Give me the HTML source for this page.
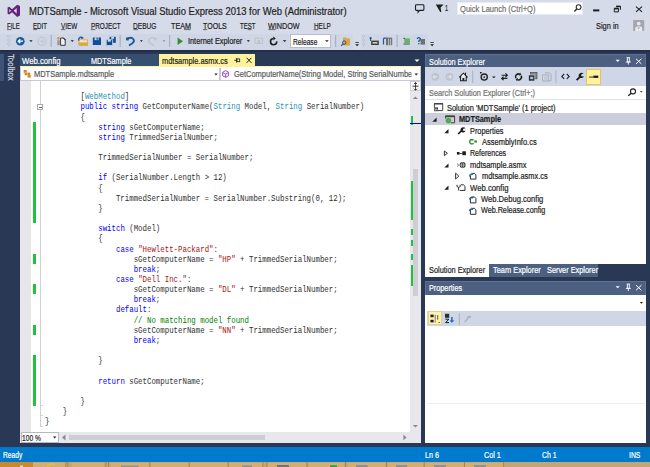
<!DOCTYPE html>
<html><head><meta charset="utf-8">
<style>
*{margin:0;padding:0;box-sizing:border-box}
html,body{width:650px;height:467px;overflow:hidden}
body{position:relative;background:#293955;font-family:"Liberation Sans",sans-serif;color:#1e1e1e}
.a{position:absolute}
.t{position:absolute;white-space:pre;line-height:1;transform-origin:0 0;-webkit-text-stroke:0.2px currentColor}
#code{left:44.5px;top:92.2px;font-family:"Liberation Mono",monospace;font-size:8.2px;line-height:10.15px;color:#303030;white-space:pre;transform:scaleX(0.9024);transform-origin:0 0}
.k{color:#0000ff}.ty{color:#2b91af}.s{color:#a31515}.c{color:#008000}
.grn{position:absolute;background:#1fc23d}
svg{position:absolute;left:0;top:0}
</style></head><body>
<!-- ============ top chrome ============ -->
<div class="a" style="left:0;top:0;width:650px;height:50px;background:#d6dbe9"></div>
<div class="a" style="left:0;top:34px;width:437px;height:16px;background:#cfd6e5"></div>
<div class="a" style="left:0;top:50px;width:650px;height:1.5px;background:#232f48"></div>
<!-- quick launch box -->
<div class="a" style="left:457px;top:1.5px;width:126px;height:13.2px;background:#fff;border:1px solid #e8ebf2"></div>
<!-- release combobox -->
<div class="a" style="left:290px;top:34.3px;width:41.2px;height:14px;background:#fff;border:1px solid #b8bccb"></div>
<!-- overflow regions of toolbars (lighter) -->
<div class="a" style="left:353px;top:34px;width:8px;height:16px;background:#d6dbe9"></div>
<div class="a" style="left:428px;top:34px;width:9px;height:16px;background:#d6dbe9"></div>

<!-- ============ document well ============ -->
<div class="a" style="left:0;top:53.7px;width:3.9px;height:27.3px;background:#3e5378"></div>
<div class="a" style="left:20px;top:54px;width:139px;height:12px;background:#364e6f"></div>
<div class="a" style="left:159px;top:54px;width:96px;height:12px;background:#fff29d"></div>
<div class="a" style="left:20px;top:66px;width:401px;height:1.2px;background:#fff29d"></div>
<!-- nav bar -->
<div class="a" style="left:20px;top:67.2px;width:401px;height:13.8px;background:#fff;border:1px solid #c6c9d6;border-top:none"></div>
<div class="a" style="left:219.2px;top:67.5px;width:1.8px;height:13px;background:#c6c9d6"></div>
<!-- editor -->
<div class="a" style="left:20px;top:81px;width:390px;height:351px;background:#fff"></div>
<div class="a" style="left:20px;top:81px;width:11px;height:351px;background:#e6e7e8"></div>
<div class="a" style="left:40px;top:81px;width:1.2px;height:345px;background:#d0d0d0"></div>
<div class="a" style="left:37px;top:104px;width:6.2px;height:6px;background:#fff;border:1px solid #a8a8a8"></div>
<div class="a" style="left:38.6px;top:106.6px;width:3px;height:0.9px;background:#666"></div>
<div class="a" style="left:40px;top:405px;width:3px;height:1px;background:#d0d0d0"></div>
<div class="a" style="left:40px;top:415px;width:3px;height:1px;background:#d0d0d0"></div>
<div class="a" style="left:40px;top:425.5px;width:3px;height:1px;background:#d0d0d0"></div>
<!-- green change bars -->
<div class="grn" style="left:33px;top:121.8px;width:3px;height:101.5px"></div>
<div class="grn" style="left:33px;top:253.8px;width:3px;height:10.15px"></div>
<div class="grn" style="left:33px;top:284.2px;width:3px;height:10.15px"></div>
<div class="grn" style="left:33px;top:324.9px;width:3px;height:10.15px"></div>
<div class="grn" style="left:33px;top:355.3px;width:3px;height:50.75px"></div>
<div id="code" class="a">        [<span class="ty">WebMethod</span>]
        <span class="k">public</span> <span class="k">string</span> GetComputerName(<span class="ty">String</span> Model, <span class="ty">String</span> SerialNumber)
        {
            <span class="k">string</span> sGetComputerName;
            <span class="k">string</span> TrimmedSerialNumber;

            TrimmedSerialNumber = SerialNumber;

            <span class="k">if</span> (SerialNumber.Length &gt; 12)
            {
                TrimmedSerialNumber = SerialNumber.Substring(0, 12);
            }

            <span class="k">switch</span> (Model)
            {
                <span class="k">case</span> <span class="s">"Hewlett-Packard"</span>:
                    sGetComputerName = <span class="s">"HP"</span> + TrimmedSerialNumber;
                    <span class="k">break</span>;
                <span class="k">case</span> <span class="s">"Dell Inc."</span>:
                    sGetComputerName = <span class="s">"DL"</span> + TrimmedSerialNumber;
                    <span class="k">break</span>;
                <span class="k">default</span>:
                    <span class="c">// No matching model found</span>
                    sGetComputerName = <span class="s">"NN"</span> + TrimmedSerialNumber;
                    <span class="k">break</span>;

            }

            <span class="k">return</span> sGetComputerName;

        }
    }
}</div>
<!-- vertical scrollbar -->
<div class="a" style="left:410px;top:81px;width:11px;height:362px;background:#e8e8ec"></div>
<div class="a" style="left:410px;top:81px;width:10.6px;height:10.4px;background:#f5f5f7;border:1px solid #cccedb"></div>
<div class="a" style="left:412.8px;top:168.6px;width:5.3px;height:127.1px;background:#cdced4"></div>
<div class="grn" style="left:410.5px;top:116px;width:2.5px;height:9.2px"></div>
<div class="a" style="left:410px;top:122.5px;width:11px;height:1.2px;background:#0000ff"></div>
<div class="grn" style="left:410.5px;top:181px;width:2.5px;height:39.4px"></div>
<div class="grn" style="left:410.5px;top:229px;width:2.5px;height:5.6px"></div>
<div class="grn" style="left:410.5px;top:240px;width:2.5px;height:6px"></div>
<div class="grn" style="left:410.5px;top:254.2px;width:2.5px;height:6.3px"></div>
<div class="grn" style="left:410.5px;top:265.2px;width:2.5px;height:20.8px"></div>
<!-- bottom bar -->
<div class="a" style="left:20px;top:432px;width:390px;height:11px;background:#e8e8ec"></div>
<div class="a" style="left:20.5px;top:432px;width:38px;height:11px;background:#fff;border:1px solid #b4b8c8"></div>
<div class="a" style="left:69px;top:434.6px;width:196px;height:5.6px;background:#cdced4"></div>

<!-- ============ solution explorer ============ -->
<div class="a" style="left:425px;top:54px;width:221px;height:13px;background:#4d6082;border:1px solid #5f7292;border-bottom:none"></div>
<div class="a" style="left:425px;top:67px;width:221px;height:19px;background:#cfd6e5"></div>
<div class="a" style="left:586.2px;top:69px;width:14.7px;height:15.5px;background:#fff29d;border:1px solid #e5c365"></div>
<div class="a" style="left:425px;top:86px;width:221px;height:178px;background:#fff"></div>
<div class="a" style="left:425px;top:99px;width:221px;height:1px;background:#dfe3ea"></div>
<div class="a" style="left:425px;top:113px;width:221px;height:11.5px;background:#cccedb"></div>
<!-- tabs -->
<div class="a" style="left:425px;top:264px;width:63.6px;height:13px;background:#fff"></div>
<div class="a" style="left:489px;top:264px;width:109px;height:13px;background:#4d6082"></div>

<!-- ============ properties ============ -->
<div class="a" style="left:425px;top:281px;width:221px;height:14px;background:#4d6082;border:1px solid #5f7292;border-bottom:none"></div>
<div class="a" style="left:425px;top:295px;width:221px;height:148px;background:#fff"></div>
<div class="a" style="left:427px;top:311px;width:219px;height:15px;background:#cfd6e5"></div>
<div class="a" style="left:427.7px;top:311.3px;width:14.8px;height:14px;background:#fff3b4;border:1px solid #e9cf7e"></div>
<div class="a" style="left:427px;top:403px;width:218px;height:1px;background:#efeff2"></div>

<!-- ============ status bar & taskbar ============ -->
<div class="a" style="left:0;top:446.8px;width:650px;height:15.2px;background:#007acc"></div>
<div class="a" style="left:0;top:462px;width:650px;height:5px;background:#c4a676"></div>
<div class="a" style="left:0;top:462px;width:32.5px;height:5px;background:#c98a2e"></div>

<svg width="650" height="467" viewBox="0 0 650 467">
<!-- VS logo -->
<path fill="#68217a" fill-rule="evenodd" d="M17.2,4.7 L20,6 L20,15.6 L17.2,16.9 L12.1,12.3 L9.2,14.6 L7.6,13.8 L7.6,7.5 L9.2,6.8 L12.1,9.3 Z M16.7,8.1 L13.6,10.8 L16.7,13.5 Z M9.3,9.0 L9.3,12.6 L11.1,10.8 Z"/>
<!-- feedback bubble -->
<path d="M416.4,4.8 H423 Q423.9,4.8 423.9,5.7 V9.5 Q423.9,10.4 423,10.4 H419.6 L418,12.2 L418,10.4 H416.4 Q415.5,10.4 415.5,9.5 V5.7 Q415.5,4.8 416.4,4.8 Z" fill="none" stroke="#1e1e1e" stroke-width="1.1"/>
<!-- notification flag -->
<path d="M435.8,4.4 L443.6,4.4 L440.6,7.6 L441.3,11.9 L440.2,12 Z" fill="#1e1e1e"/>
<!-- quick launch magnifier -->
<circle cx="578.6" cy="7.1" r="2.4" fill="none" stroke="#2d2d30" stroke-width="1.1"/>
<path d="M577,8.8 L574.3,11.5" stroke="#2d2d30" stroke-width="1.4"/>
<!-- window buttons -->
<rect x="593.1" y="9.4" width="6.2" height="2" fill="#1e1e1e"/>
<path d="M616,6.3 H620.4 V9.9 M614.3,8.4 H618.4 V11.9 H614.3 Z" fill="none" stroke="#1e1e1e" stroke-width="1"/>
<path d="M614.3,8.6 H618.4" stroke="#1e1e1e" stroke-width="1.6"/>
<path d="M616,6.5 H620.4" stroke="#1e1e1e" stroke-width="1.4"/>
<path d="M636,6.6 L642,11.8 M642,6.6 L636,11.8" stroke="#1e1e1e" stroke-width="1.1"/>
<!-- avatar -->
<rect x="633.2" y="20" width="11" height="11" fill="#a3a6ae"/>
<circle cx="638.7" cy="23.6" r="1.9" fill="#e6e8ee"/>
<path d="M635.2,31 V28.5 Q635.2,26.2 638.7,26.2 Q642.2,26.2 642.2,28.5 V31 Z" fill="#e6e8ee"/>
<path d="M637.6,27.2 L638.7,29.6 L639.8,27.2 Z" fill="#a3a6ae"/>

<g fill="#1e1e1e" opacity="0.75"><rect x="7.1" y="29.3" width="4.2" height="0.8"/><rect x="33.2" y="29.3" width="4.1" height="0.8"/><rect x="60.9" y="29.3" width="4.5" height="0.8"/><rect x="90.9" y="29.3" width="4.3" height="0.8"/><rect x="133.4" y="29.3" width="4.6" height="0.8"/><rect x="184.2" y="29.3" width="6.4" height="0.8"/><rect x="202.9" y="29.3" width="4.3" height="0.8"/><rect x="247.6" y="29.3" width="4.0" height="0.8"/><rect x="268.3" y="29.3" width="7.3" height="0.8"/><rect x="313.7" y="29.3" width="4.5" height="0.8"/></g>
<!-- ===== toolbar ===== -->
<!-- grip -->
<g fill="#a8afc0">
<rect x="7.3" y="35.5" width="1" height="1"/><rect x="9.5" y="35.5" width="1" height="1"/>
<rect x="8.4" y="37.5" width="1" height="1"/>
<rect x="7.3" y="39.5" width="1" height="1"/><rect x="9.5" y="39.5" width="1" height="1"/>
<rect x="8.4" y="41.5" width="1" height="1"/>
<rect x="7.3" y="43.5" width="1" height="1"/><rect x="9.5" y="43.5" width="1" height="1"/>
<rect x="8.4" y="45.5" width="1" height="1"/>
<rect x="362.2" y="35.5" width="1" height="1"/><rect x="364.2" y="35.5" width="1" height="1"/>
<rect x="363.2" y="37.5" width="1" height="1"/>
<rect x="362.2" y="39.5" width="1" height="1"/><rect x="364.2" y="39.5" width="1" height="1"/>
<rect x="363.2" y="41.5" width="1" height="1"/>
<rect x="362.2" y="43.5" width="1" height="1"/><rect x="364.2" y="43.5" width="1" height="1"/>
<rect x="363.2" y="45.5" width="1" height="1"/>
</g>
<!-- back -->
<circle cx="20.3" cy="41.2" r="4.3" fill="#1b5a9e"/>
<path d="M23,41.2 H18.4 M20.3,39.1 L18.2,41.2 L20.3,43.3" stroke="#fff" stroke-width="1.3" fill="none"/>
<path d="M29.4,40.3 H32.6 L31,42 Z" fill="#1e1e1e"/>
<!-- forward (disabled) -->
<circle cx="41.9" cy="41.2" r="4" fill="none" stroke="#c4c7cf" stroke-width="1.3"/>
<path d="M39.8,41.2 H43.8 M42,39.4 L43.8,41.2 L42,43" stroke="#c4c7cf" stroke-width="1.1" fill="none"/>
<!-- separators -->
<g fill="#a9b0c0">
<rect x="50.6" y="35" width="1.2" height="12"/>
<rect x="119.6" y="35" width="1.2" height="12"/>
<rect x="169" y="35" width="1.2" height="12"/>
<rect x="335" y="35" width="1.2" height="12"/>
<rect x="396.5" y="35" width="1.2" height="12"/>
</g>
<!-- new project -->
<rect x="57.2" y="37" width="2.3" height="2.6" fill="#d49b42"/>
<rect x="57.2" y="40.2" width="2.6" height="5" fill="#9a9a9a"/>
<path d="M60.6,38 H63.4 L65.2,39.8 V45.3 H60.6 Z" fill="#f4f4f4" stroke="#3a3a3a" stroke-width="1"/>
<path d="M63.2,37.8 L65.6,40.2" stroke="#3a3a3a" stroke-width="1.2"/>
<path d="M70.6,40.3 H73.9 L72.25,42 Z" fill="#1e1e1e"/>
<!-- open folder -->
<path d="M79,39 H82.2 L83,39.8 H87.6 V45.4 H79 Z" fill="#f3e3b8" stroke="#dca646" stroke-width="0.8"/>
<path d="M78.8,42.4 H87.8 V45.6 H78.8 Z" fill="#dca646"/>
<path d="M79.2,40.6 A2,2 0 0 1 82.4,38" stroke="#1b5a9e" stroke-width="1.3" fill="none"/>
<path d="M81.6,36.4 L83.8,38 L81.4,39.4 Z" fill="#1b5a9e"/>
<!-- save -->
<path d="M92.8,37.5 H101 V45 H92.8 Z" fill="#0e4f98"/>
<rect x="94.6" y="37.5" width="4" height="2.6" fill="#cfd6e5"/>
<rect x="96.5" y="37.9" width="1.3" height="1.8" fill="#0e4f98"/>
<rect x="94.3" y="42" width="5" height="3" fill="#0e4f98"/>
<!-- save all -->
<path d="M109.6,36.8 H115.8 V42.8 H109.6 Z" fill="#0e4f98"/>
<rect x="111.2" y="36.8" width="2.8" height="2" fill="#cfd6e5"/>
<path d="M106.2,39.6 H112.6 V45.5 H106.2 Z" fill="#0e4f98" stroke="#cfd6e5" stroke-width="0.8"/>
<rect x="107.8" y="39.7" width="3" height="2" fill="#cfd6e5"/>
<!-- undo -->
<path d="M127.6,38.6 Q131.6,36.6 133.6,39.4 Q134.8,41.4 132,43.6 L129,45.6" stroke="#1b5a9e" stroke-width="1.8" fill="none"/>
<rect x="126" y="37.5" width="2.8" height="2.9" fill="#1b5a9e"/>
<path d="M140,40.3 H142.8 L141.4,42 Z" fill="#1e1e1e"/>
<!-- redo disabled -->
<path d="M155.2,38.6 Q151.2,36.6 149.2,39.4 Q148,41.4 150.8,43.6 L153.8,45.6" stroke="#c2c5cd" stroke-width="1.6" fill="none"/>
<rect x="154" y="37.5" width="2.6" height="2.8" fill="#c2c5cd"/>
<path d="M162.7,40.3 H165.4 L164,42 Z" fill="#8a8e99"/>
<!-- play -->
<path d="M177.6,37.5 L183,41.2 L177.6,44.9 Z" fill="#388a34"/>
<path d="M246.8,40.3 H249.9 L248.35,42 Z" fill="#1e1e1e"/>
<!-- browser link (disabled) -->
<rect x="255.2" y="38.2" width="7.4" height="5.2" fill="none" stroke="#c0c3cb" stroke-width="1"/>
<rect x="257.4" y="40.2" width="3" height="3" fill="#c0c3cb"/>
<!-- refresh -->
<path d="M276.69,41.33 A3.1,3.1 0 1 1 273.33,38.51" stroke="#1e1e1e" stroke-width="1.6" fill="none"/>
<path d="M275.72,38.30 L273.16,36.52 L273.50,40.50 Z" fill="#1e1e1e"/>
<path d="M282.7,40.3 H286.5 L284.6,42 Z" fill="#1e1e1e"/>
<!-- release combo arrow -->
<path d="M325,40.3 H328.8 L326.9,42 Z" fill="#1e1e1e"/>
<!-- find in files -->
<path d="M343,37.5 H346 L347,38.5 H350 V45.5 H343 Z" fill="#dca646"/>
<circle cx="344.2" cy="42.6" r="1.7" fill="none" stroke="#1b5a9e" stroke-width="1"/>
<path d="M343,43.8 L341.2,45.8" stroke="#1b5a9e" stroke-width="1.2"/>
<!-- overflow 1 -->
<rect x="355.4" y="42.2" width="3.4" height="0.8" fill="#1e1e1e"/>
<path d="M355.2,44.3 H359 L357.1,46.2 Z" fill="#1e1e1e"/>
<!-- toolbar2 icons -->
<rect x="371.2" y="40.6" width="7.6" height="4.4" fill="#3c3c3c"/>
<rect x="372.6" y="42" width="4.8" height="1.6" fill="#d0d0d0"/>
<circle cx="370.6" cy="38.2" r="1.1" fill="#1b5a9e"/>
<path d="M370.6,38.5 V41" stroke="#3c3c3c" stroke-width="0.9"/>
<path d="M383.5,38.2 H386.5 M383.5,38.2 V44.5" stroke="#1b5a9e" stroke-width="1.2" fill="none"/>
<rect x="386" y="37.6" width="6.2" height="7.6" fill="#707070"/>
<rect x="388.3" y="38.8" width="0.8" height="6.4" fill="#cfd6e5"/>
<rect x="390.3" y="38.8" width="0.8" height="6.4" fill="#cfd6e5"/>
<rect x="404.3" y="38.4" width="5.6" height="4.6" fill="#5fb760"/>
<path d="M403.4,38.4 H405 M403.4,44 H409.9" stroke="#3c3c3c" stroke-width="0.9"/>
<path d="M417,38.8 Q418.6,36.6 420.2,38.4 Q420.8,40.2 418.8,41 V42" stroke="#1b5a9e" stroke-width="1.3" fill="none"/>
<rect x="418.2" y="43" width="1.2" height="1.4" fill="#1b5a9e"/>
<rect x="420.6" y="39" width="4.4" height="5.6" fill="#707070"/>
<rect x="430.4" y="42.2" width="3.4" height="0.8" fill="#1e1e1e"/>
<path d="M430.2,44.3 H434 L432.1,46.2 Z" fill="#1e1e1e"/>

<!-- ===== doc tab icons ===== -->
<path d="M234.2,60.3 H236.6 M236.6,58 V62.6" stroke="#1e1e1e" stroke-width="0.9" fill="none"/><rect x="236.9" y="58.9" width="2.8" height="2.8" fill="none" stroke="#1e1e1e" stroke-width="0.8"/>
<path d="M246.6,57.8 L251.4,62.8 M251.4,57.8 L246.6,62.8" stroke="#1e1e1e" stroke-width="1"/>
<!-- tab overflow arrow -->
<path d="M414.5,59.6 H419.5 L417,62 Z" fill="#fff"/>
<!-- nav bar icons -->
<g fill="#d08a2e">
<rect x="23.6" y="70" width="3.2" height="2.8"/><rect x="27.3" y="72.6" width="3" height="2.6"/><rect x="27.6" y="75" width="3.1" height="2.6"/><rect x="24.6" y="73" width="2.4" height="2.2"/>
</g>
<path d="M214.4,73.6 H217.6 L216,75.4 Z" fill="#1e1e1e"/>
<path d="M225.6,70.6 L228.6,72.3 V75.7 L225.6,77.4 L222.6,75.7 V72.3 Z" fill="#f3ecf8" stroke="#8c3fb4" stroke-width="0.9"/>
<path d="M225.6,74.2 V77.2 M222.8,72.5 L225.6,74.2 L228.4,72.5" stroke="#8c3fb4" stroke-width="0.8" fill="none"/>
<path d="M414.5,73.6 H418 L416.25,75.4 Z" fill="#1e1e1e"/>

<!-- splitter button glyph -->
<rect x="412.5" y="85.6" width="6" height="1.4" fill="#717171"/>
<path d="M415.5,82.6 V90.2 M414,84 L415.5,82.5 L417,84 M414,88.8 L415.5,90.3 L417,88.8" stroke="#1e1e1e" stroke-width="0.8" fill="none"/>
<!-- scroll arrows -->
<path d="M412.8,99 H418 L415.4,96.6 Z" fill="#868999"/>
<path d="M412.8,425 H418 L415.4,427.4 Z" fill="#868999"/>
<path d="M62,437.4 L65.5,434.4 V440.4 Z" fill="#868999"/>
<path d="M406.6,437.4 L403.4,434.6 V440.2 Z" fill="#868999"/>
<path d="M53,436.6 H56.4 L54.7,438.4 Z" fill="#1e1e1e"/>

<!-- ===== solution explorer ===== -->
<!-- title buttons -->
<path d="M615.6,59.8 H619.8 L617.7,61.9 Z" fill="#fff"/>
<path d="M626.6,57.7 H630 M627.4,57.7 V62 H629.3 V57.7 M625.8,62 H630.8 M628.3,62 V64.6" stroke="#fff" stroke-width="0.9" fill="none"/>
<path d="M636,58.8 L641.4,63.9 M641.4,58.8 L636,63.9" stroke="#fff" stroke-width="1"/>
<!-- toolbar -->
<circle cx="435.3" cy="76.9" r="3.8" fill="#bfc3cc"/>
<path d="M437.4,76.9 H433.4 M435,75.1 L433.2,76.9 L435,78.7" stroke="#dfe2e9" stroke-width="1.1" fill="none"/>
<circle cx="449.4" cy="76.9" r="3.8" fill="#bfc3cc"/>
<path d="M447.3,76.9 H451.3 M449.7,75.1 L451.5,76.9 L449.7,78.7" stroke="#dfe2e9" stroke-width="1.1" fill="none"/>
<path d="M459.2,77.4 L463.4,73.2 L467.6,77.4 M460.6,76.4 V80.8 H466.2 V76.4" stroke="#1e1e1e" stroke-width="1.1" fill="#fff"/>
<path d="M465.5,72.6 V75.4" stroke="#1e1e1e" stroke-width="1"/>
<rect x="462.4" y="78" width="2" height="2.8" fill="#1e1e1e"/>
<rect x="472.2" y="70.5" width="1" height="12.5" fill="#a9b0c0"/>
<circle cx="484.2" cy="77.1" r="3.1" fill="none" stroke="#1e1e1e" stroke-width="1.3"/>
<circle cx="484.2" cy="77.1" r="0.9" fill="#1e1e1e"/>
<path d="M479.8,72 L482.2,72 L480.6,74 Z" fill="#1e1e1e"/>
<path d="M492,76.6 H495.7 L493.85,78.2 Z" fill="#1e1e1e"/>
<path d="M501.6,75.2 H507.2 M505.4,73.4 L507.4,75.2 L505.4,77 M507.4,78.4 H501.8 M503.6,76.6 L501.6,78.4 L503.6,80.2" stroke="#1e1e1e" stroke-width="1.1" fill="none"/>
<path d="M521.22,75.63 A3.0,3.0 0 0 1 517.23,79.62 M515.78,78.17 A3.0,3.0 0 0 1 519.77,74.18" stroke="#1e1e1e" stroke-width="1.6" fill="none"/>
<path d="M515.69,79.07 L516.89,81.32 L518.06,78.12 Z M521.31,74.73 L520.11,72.48 L518.94,75.68 Z" fill="#1e1e1e"/>
<rect x="530.6" y="72.4" width="6.4" height="6.4" fill="#8a8a8a" stroke="#3c3c3c" stroke-width="0.6"/>
<rect x="528.6" y="75" width="6.2" height="6" fill="#2d2d30" stroke="#cfd6e5" stroke-width="0.6"/>
<rect x="530.2" y="76.8" width="3" height="2.4" fill="#9cc8f0"/>
<path d="M545,72.9 H549.5 L551,74.4 V80.8 H545.4" stroke="#a9adb7" stroke-width="1" fill="none"/>
<rect x="542.6" y="75" width="5.6" height="6" fill="#d8dce6" stroke="#a9adb7" stroke-width="1"/>
<path d="M544,77.2 H547 M544,79 H547" stroke="#a9adb7" stroke-width="0.7"/>
<rect x="555.4" y="70.5" width="1" height="12.5" fill="#a9b0c0"/>
<path d="M564.2,74 L561.8,76.4 L564.2,78.8 M566.8,74 L569.2,76.4 L566.8,78.8" stroke="#1e1e1e" stroke-width="1.1" fill="none"/>
<path d="M576.6,80.2 L580.2,76.6" stroke="#1e1e1e" stroke-width="1.9"/>
<path d="M579.4,77.4 A2.7,2.7 0 1 1 583.6,73.8 L581.8,74 L581,75.4 L582,76.6 L583.8,76.2 A2.7,2.7 0 0 1 579.4,77.4 Z" fill="#1e1e1e"/>
<rect x="589" y="76.6" width="4.5" height="0.9" fill="#1e1e1e"/>
<rect x="593.3" y="75.6" width="5" height="2.3" fill="#1e1e1e"/>
<!-- search -->
<circle cx="633" cy="91.4" r="2.5" fill="none" stroke="#1e1e1e" stroke-width="1.1"/>
<path d="M631.3,93.2 L628.2,95.8" stroke="#1e1e1e" stroke-width="1.4"/>
<path d="M639.8,91 H642.7 L641.25,92.6 Z" fill="#444"/>
<!-- tree icons -->
<!-- solution -->
<path d="M434.4,107.6 V103.6 H442.7 V110.6 H437.6" fill="none" stroke="#424242" stroke-width="1"/>
<rect x="434.2" y="103.1" width="8.6" height="1.4" fill="#424242"/>
<rect x="434.1" y="107.4" width="3.9" height="3.8" fill="#424242"/>
<path d="M434.9,108.6 L435.6,110.4 L436.3,108.6 M436.6,109 L437.4,110.4" stroke="#fff" stroke-width="0.6" fill="none"/>
<!-- MDTSample row -->
<path d="M432.4,121.7 L436.6,117.5 V121.7 Z" fill="#1e1e1e"/>
<path d="M445.6,118.6 V116 H454.6 V122.8 H451" fill="none" stroke="#424242" stroke-width="1"/>
<rect x="445.2" y="115.6" width="9.6" height="1.6" fill="#424242"/>
<circle cx="448.5" cy="120.6" r="2.9" fill="#5cb35c"/>
<circle cx="448.5" cy="120.6" r="1.6" fill="none" stroke="#3d933d" stroke-width="0.7"/>
<!-- properties -->
<path d="M444.3,133.2 L448.5,129.0 V133.2 Z" fill="#1e1e1e"/>
<path d="M458.2,134 L461.6,130.6" stroke="#1e1e1e" stroke-width="1.7"/>
<path d="M461,131.2 A2.5,2.5 0 1 1 465.6,128.6 L463.8,128.6 L462.8,129.8 L463.6,131 L465.6,130.4 A2.5,2.5 0 0 1 461,131.2 Z" fill="#1e1e1e"/>
<!-- C# -->
<path d="M473.6,140.2 Q472.8,139.5 471.8,139.5 Q469.8,139.6 469.8,141.7 Q469.8,143.9 471.8,143.9 Q472.8,143.9 473.6,143.2" fill="none" stroke="#388a34" stroke-width="1.3"/>
<rect x="474.3" y="140.4" width="2.6" height="2.2" fill="#388a34"/>
<!-- references -->
<path d="M444.4,151 L447.4,153.3 L444.4,155.6 Z" fill="none" stroke="#1e1e1e" stroke-width="0.9"/>
<rect x="456.9" y="152" width="2.6" height="2.6" fill="#1e1e1e"/>
<rect x="459.4" y="153" width="3" height="0.8" fill="#1e1e1e"/>
<rect x="462.3" y="151.3" width="3.6" height="3.9" fill="#1e1e1e"/>
<!-- asmx -->
<path d="M444.3,167.6 L448.5,163.4 V167.6 Z" fill="#1e1e1e"/>
<path d="M457,163.6 L458.8,165.1 L457,166.6" stroke="#555" stroke-width="0.8" fill="none"/>
<circle cx="462.6" cy="165.1" r="3" fill="#3a3a3a"/>
<ellipse cx="462.6" cy="165.1" rx="1.1" ry="2.6" fill="none" stroke="#d8d8d8" stroke-width="0.6"/>
<path d="M459.8,165.1 H465.4" stroke="#d8d8d8" stroke-width="0.6"/>
<!-- asmx.cs -->
<path d="M455.6,173.2 L458.8,176.1 L455.6,179 Z" fill="none" stroke="#1e1e1e" stroke-width="0.9"/>
<path d="M470.4,175.5 V179.1 H475.9 V174.8 L474.4,173.3 H472.9" fill="#fff" stroke="#2d2d2d" stroke-width="1"/>
<path d="M469.6,176.4 Q469.6,174 472.2,174" stroke="#1b5a9e" stroke-width="1.2" fill="none"/>
<path d="M471.6,172.4 L473.8,174 L471.6,175.6 Z" fill="#1b5a9e"/>
<!-- web.config -->
<path d="M444.3,189.8 L448.5,185.6 V189.8 Z" fill="#1e1e1e"/>
<path d="M457,184.8 V186.6 Q458.6,188.2 460.2,186.6 V184.8 M458.6,187.6 V190.4" stroke="#2d2d2d" stroke-width="1" fill="none"/>
<path d="M461,184.8 H463.4 L465,186.4 V190.4 H459.8" stroke="#2d2d2d" stroke-width="1" fill="none"/>
<!-- debug/release configs -->
<path d="M470.4,198.6 V202.9 H475.9 V198.4 L474.4,196.9 H472.9" fill="#fff" stroke="#2d2d2d" stroke-width="1"/>
<path d="M469.6,199.6 Q469.6,197.4 472.2,197.4" stroke="#1b5a9e" stroke-width="1.2" fill="none"/>
<path d="M471.6,195.8 L473.8,197.4 L471.6,199 Z" fill="#1b5a9e"/>
<path d="M470.4,210 V214.3 H475.9 V209.8 L474.4,208.3 H472.9" fill="#fff" stroke="#2d2d2d" stroke-width="1"/>
<path d="M469.6,211 Q469.6,208.8 472.2,208.8" stroke="#1b5a9e" stroke-width="1.2" fill="none"/>
<path d="M471.6,207.2 L473.8,208.8 L471.6,210.4 Z" fill="#1b5a9e"/>

<!-- taskbar -->
<g fill="#d4ad70">
<rect x="33" y="462.6" width="32" height="4.4"/><rect x="72" y="462.6" width="32" height="4.4"/>
<rect x="111" y="462.6" width="37.5" height="4.4"/><rect x="151" y="462.6" width="37.5" height="4.4"/>
<rect x="190" y="462.6" width="37" height="4.4"/><rect x="229" y="462.6" width="33" height="4.4"/>
<rect x="268" y="462.6" width="38" height="4.4"/><rect x="309" y="462.6" width="35" height="4.4"/>
<rect x="348" y="462.6" width="37" height="4.4"/><rect x="388" y="462.6" width="35" height="4.4"/>
<rect x="425" y="462.6" width="38.5" height="4.4"/><rect x="465" y="462.6" width="38" height="4.4"/>
</g>
<g fill="#b57a28">
<rect x="65.5" y="462" width="0.8" height="5"/><rect x="67.5" y="462" width="0.8" height="5"/>
<rect x="105.5" y="462" width="0.8" height="5"/><rect x="108" y="462" width="0.8" height="5"/>
<rect x="149.5" y="462" width="0.8" height="5"/><rect x="188.8" y="462" width="0.8" height="5"/>
<rect x="227.8" y="462" width="0.8" height="5"/><rect x="262.5" y="462" width="0.8" height="5"/><rect x="266.5" y="462" width="0.8" height="5"/>
<rect x="306.6" y="462" width="0.8" height="5"/><rect x="345" y="462" width="0.8" height="5"/><rect x="386" y="462" width="0.8" height="5"/>
<rect x="423.8" y="462" width="0.8" height="5"/><rect x="464" y="462" width="0.8" height="5"/><rect x="503.3" y="462" width="0.8" height="5"/>
</g>
<path d="M47,467 Q51,462.6 55,464.6" stroke="#e6c23a" stroke-width="1.6" fill="none"/>
<rect x="20" y="465.5" width="3" height="1.5" fill="#e8dcc4"/>
<g fill="#8d9196">
<rect x="121" y="465.6" width="17.5" height="1.4"/>
<rect x="242" y="465.4" width="10" height="1.6"/>
<rect x="356" y="465" width="11.7" height="2"/>
<rect x="396" y="465" width="11" height="2"/>
<rect x="434" y="465" width="12" height="2"/>
<rect x="474" y="465" width="12" height="2"/>
</g>
<rect x="277" y="465" width="12" height="2" fill="#6f7378"/>
<rect x="330" y="465.2" width="7" height="1.8" fill="#2fa34a"/>
<!-- ===== properties ===== -->
<path d="M615.6,286.2 H619.8 L617.7,288.3 Z" fill="#fff"/>
<path d="M626.6,284.1 H630 M627.4,284.1 V288.4 H629.3 V284.1 M625.8,288.4 H630.8 M628.3,288.4 V291" stroke="#fff" stroke-width="0.9" fill="none"/>
<path d="M636,285.2 L641.4,290.3 M641.4,285.2 L636,290.3" stroke="#fff" stroke-width="1"/>
<path d="M639.8,302 H643 L641.4,303.8 Z" fill="#1e1e1e"/>
<!-- categorized -->
<rect x="430.4" y="314.6" width="3.2" height="2.6" fill="#1e1e1e"/>
<rect x="430.4" y="319.8" width="3.2" height="2.6" fill="#1e1e1e"/>
<rect x="434.6" y="314.8" width="1.2" height="5" fill="#8a8a7a"/>
<rect x="437.2" y="315" width="1" height="4.6" fill="#5a5a5a"/>
<rect x="434.6" y="320.2" width="1.2" height="2.4" fill="#8a8a7a"/>
<rect x="438.6" y="322" width="1" height="1" fill="#1e1e1e"/>
<!-- alphabetical -->
<rect x="445" y="313.8" width="4.2" height="4" fill="#2d2d30"/>
<path d="M445.4,319.2 H448.8 L445.6,322.6 H449" stroke="#1e1e1e" stroke-width="1" fill="none"/>
<path d="M451.9,317 V321" stroke="#1b6fd6" stroke-width="1.6"/>
<path d="M449.6,320.2 H454.3 L451.95,322.9 Z" fill="#1b6fd6"/>
<rect x="458.8" y="313" width="1" height="12" fill="#a9b0c0"/>
<path d="M464.5,322 L467.8,318.8" stroke="#b0b4bd" stroke-width="1.6"/>
<path d="M467.2,319.4 A2.4,2.4 0 1 1 471.4,317 L469.8,318.6 L469.1,318 Z" fill="#b0b4bd"/>
</svg>

<div class="t" style="left:28.50px;top:6.73px;font-size:10px;color:#1e1e1e;font-weight:normal;transform:scaleX(0.9457)">MDTSample - Microsoft Visual Studio Express 2013 for Web (Administrator)</div>
<div class="t" style="left:7.10px;top:22.02px;font-size:8.6px;color:#1e1e1e;font-weight:normal;transform:scaleX(0.7005)">FILE</div>
<div class="t" style="left:33.20px;top:22.02px;font-size:8.6px;color:#1e1e1e;font-weight:normal;transform:scaleX(0.7134)">EDIT</div>
<div class="t" style="left:60.90px;top:22.02px;font-size:8.6px;color:#1e1e1e;font-weight:normal;transform:scaleX(0.7396)">VIEW</div>
<div class="t" style="left:90.90px;top:22.02px;font-size:8.6px;color:#1e1e1e;font-weight:normal;transform:scaleX(0.7392)">PROJECT</div>
<div class="t" style="left:133.40px;top:22.02px;font-size:8.6px;color:#1e1e1e;font-weight:normal;transform:scaleX(0.7676)">DEBUG</div>
<div class="t" style="left:170.70px;top:22.02px;font-size:8.6px;color:#1e1e1e;font-weight:normal;transform:scaleX(0.8392)">TEAM</div>
<div class="t" style="left:202.90px;top:22.02px;font-size:8.6px;color:#1e1e1e;font-weight:normal;transform:scaleX(0.8207)">TOOLS</div>
<div class="t" style="left:239.80px;top:22.02px;font-size:8.6px;color:#1e1e1e;font-weight:normal;transform:scaleX(0.7000)">TEST</div>
<div class="t" style="left:268.30px;top:22.02px;font-size:8.6px;color:#1e1e1e;font-weight:normal;transform:scaleX(0.8369)">WINDOW</div>
<div class="t" style="left:313.70px;top:22.02px;font-size:8.6px;color:#1e1e1e;font-weight:normal;transform:scaleX(0.7439)">HELP</div>
<div class="t" style="left:460.00px;top:4.50px;font-size:8.5px;color:#717171;font-weight:normal;transform:scaleX(0.8898)">Quick Launch (Ctrl+Q)</div>
<div class="t" style="left:596.00px;top:22.30px;font-size:8.5px;color:#1e1e1e;font-weight:normal;transform:scaleX(0.8758)">Sign in</div>
<div class="t" style="left:445.40px;top:4.31px;font-size:9.2px;color:#1e1e1e;font-weight:normal;transform:scaleX(0.6000)">1</div>
<div class="t" style="left:188.20px;top:37.20px;font-size:8.5px;color:#1e1e1e;font-weight:normal;transform:scaleX(0.8634)">Internet Explorer</div>
<div class="t" style="left:292.70px;top:37.60px;font-size:8.5px;color:#1e1e1e;font-weight:normal;transform:scaleX(0.7820)">Release</div>
<div class="t" style="left:22.00px;top:57.30px;font-size:8.5px;color:#ffffff;font-weight:normal;transform:scaleX(0.9099)">Web.config</div>
<div class="t" style="left:90.90px;top:57.30px;font-size:8.5px;color:#ffffff;font-weight:normal;transform:scaleX(0.8547)">MDTSample</div>
<div class="t" style="left:162.30px;top:56.90px;font-size:8.5px;color:#1e1e1e;font-weight:normal;transform:scaleX(0.8737)">mdtsample.asmx.cs</div>
<div class="t" style="left:34.20px;top:70.30px;font-size:8.5px;color:#5a5a5a;font-weight:normal;transform:scaleX(0.8793)">MDTSample.mdtsample</div>
<div class="t" style="left:234.30px;top:70.30px;font-size:8.5px;color:#5a5a5a;font-weight:normal;transform:scaleX(0.8793);width:201.5px;overflow:hidden">GetComputerName(String Model, String SerialNumber)</div>
<div class="t" style="left:428.70px;top:57.77px;font-size:8.3px;color:#ffffff;font-weight:normal;transform:scaleX(0.8862)">Solution Explorer</div>
<div class="t" style="left:429.20px;top:88.57px;font-size:8.3px;color:#717171;font-weight:normal;transform:scaleX(0.8862)">Search Solution Explorer (Ctrl+;)</div>
<div class="t" style="left:447.00px;top:103.69px;font-size:8.4px;color:#1e1e1e;font-weight:normal;transform:scaleX(0.8862)">Solution &#x27;MDTSample&#x27; (1 project)</div>
<div class="t" style="left:458.60px;top:115.11px;font-size:8.4px;color:#1e1e1e;font-weight:bold;transform:scaleX(0.8763)">MDTSample</div>
<div class="t" style="left:469.50px;top:126.53px;font-size:8.4px;color:#1e1e1e;font-weight:normal;transform:scaleX(0.8741)">Properties</div>
<div class="t" style="left:481.50px;top:137.95px;font-size:8.4px;color:#1e1e1e;font-weight:normal;transform:scaleX(0.8966)">AssemblyInfo.cs</div>
<div class="t" style="left:469.50px;top:149.37px;font-size:8.4px;color:#1e1e1e;font-weight:normal;transform:scaleX(0.8443)">References</div>
<div class="t" style="left:469.50px;top:160.79px;font-size:8.4px;color:#1e1e1e;font-weight:normal;transform:scaleX(0.8923)">mdtsample.asmx</div>
<div class="t" style="left:481.50px;top:172.21px;font-size:8.4px;color:#1e1e1e;font-weight:normal;transform:scaleX(0.8874)">mdtsample.asmx.cs</div>
<div class="t" style="left:469.50px;top:183.63px;font-size:8.4px;color:#1e1e1e;font-weight:normal;transform:scaleX(0.9219)">Web.config</div>
<div class="t" style="left:481.40px;top:195.05px;font-size:8.4px;color:#1e1e1e;font-weight:normal;transform:scaleX(0.9060)">Web.Debug.config</div>
<div class="t" style="left:481.40px;top:206.47px;font-size:8.4px;color:#1e1e1e;font-weight:normal;transform:scaleX(0.8597)">Web.Release.config</div>
<div class="t" style="left:429.20px;top:266.37px;font-size:8.3px;color:#1e1e1e;font-weight:normal;transform:scaleX(0.8877)">Solution Explorer</div>
<div class="t" style="left:493.00px;top:266.37px;font-size:8.3px;color:#ffffff;font-weight:normal;transform:scaleX(0.8934)">Team Explorer</div>
<div class="t" style="left:547.00px;top:266.37px;font-size:8.3px;color:#ffffff;font-weight:normal;transform:scaleX(0.8862)">Server Explorer</div>
<div class="t" style="left:428.90px;top:284.47px;font-size:8.3px;color:#ffffff;font-weight:normal;transform:scaleX(0.8761)">Properties</div>
<div class="t" style="left:3.00px;top:450.50px;font-size:8.5px;color:#ffffff;font-weight:normal;transform:scaleX(0.7820)">Ready</div>
<div class="t" style="left:15.21px;top:54.10px;font-size:8.4px;color:#d6dce8;font-weight:normal;transform:rotate(90deg) scaleX(0.9199)">Toolbox</div>
<div class="t" style="left:425.00px;top:450.50px;font-size:8.5px;color:#ffffff;font-weight:normal;transform:scaleX(0.8444)">Ln 6</div>
<div class="t" style="left:483.80px;top:450.50px;font-size:8.5px;color:#ffffff;font-weight:normal;transform:scaleX(0.8451)">Col 1</div>
<div class="t" style="left:542.30px;top:450.50px;font-size:8.5px;color:#ffffff;font-weight:normal;transform:scaleX(0.8065)">Ch 1</div>
<div class="t" style="left:628.80px;top:450.50px;font-size:8.5px;color:#ffffff;font-weight:normal;transform:scaleX(0.8000)">INS</div>
<div class="t" style="left:21.90px;top:433.70px;font-size:8.5px;color:#1e1e1e;font-weight:normal;transform:scaleX(0.7864)">100 %</div>
</body></html>
